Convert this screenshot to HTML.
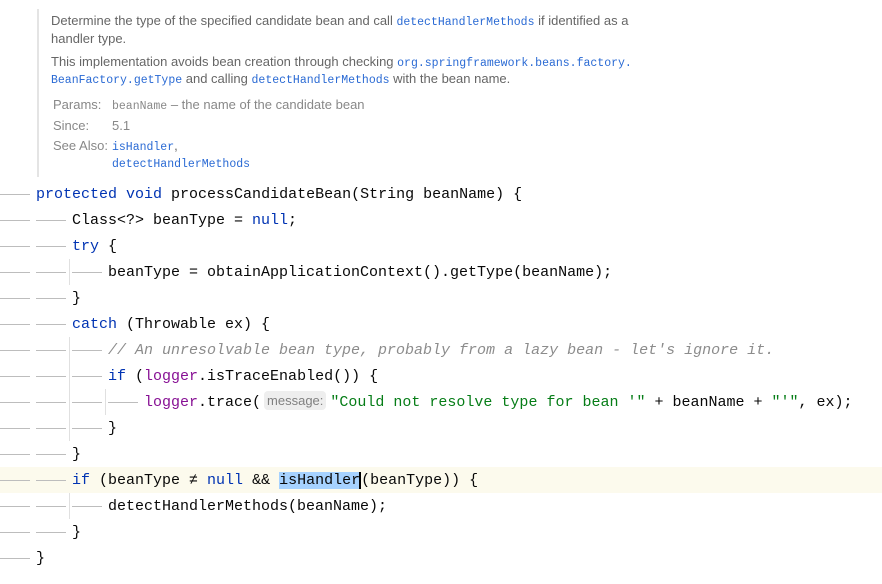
<!DOCTYPE html>
<html><head><meta charset="utf-8"><style>
body{margin:0;width:882px;height:584px;background:#fff;overflow:hidden;position:relative;font-family:"Liberation Sans",sans-serif}
.doc{position:absolute;left:37px;top:9px;width:840px;height:168px;border-left:2px solid #e4e4e4;color:#666;font-size:13px}
.doc div{position:absolute;left:12px;white-space:nowrap}
.m{font-family:"Liberation Mono",monospace;font-size:11.5px;color:#2a6ad4}
.g{color:#888}
.ln{position:absolute;left:0;height:26px;width:882px;font-family:"Liberation Mono",monospace;font-size:15px;line-height:28px;color:#080808;white-space:pre}
.seg{position:absolute;top:13px;height:1px;width:30px;background:#bdbdbd}
.k{color:#0033b3}.c{color:#8c8c8c;font-style:italic}.s{color:#067d17}.p{color:#871094}
.hint{display:inline-block;background:#eeeeee;color:#808080;font-family:"Liberation Sans",sans-serif;font-size:13px;line-height:19px;padding:0 3px;border-radius:4px;margin:0 4px 0 3px;vertical-align:1px}
.sel{background:#a6d2ff}
.v{position:absolute;width:1px;background:#e0e0e0}
</style></head><body>
<div class="doc">
<div style="top:4px">Determine the type of the specified candidate bean and call <span class="m">detectHandlerMethods</span> if identified as a</div>
<div style="top:22px">handler type.</div>
<div style="top:45px">This implementation avoids bean creation through checking <span class="m">org.springframework.beans.factory.</span></div>
<div style="top:62px"><span class="m">BeanFactory.getType</span> and calling <span class="m">detectHandlerMethods</span> with the bean name.</div>
<div style="top:88px;left:14px" class="g">Params:</div><div style="top:88px;left:73px" class="g"><span class="m" style="color:#888">beanName</span> – the name of the candidate bean</div>
<div style="top:109px;left:14px" class="g">Since:</div><div style="top:109px;left:73px" class="g">5.1</div>
<div style="top:129px;left:14px" class="g">See Also:</div><div style="top:129px;left:73px"><span class="m">isHandler</span>,</div>
<div style="top:146px;left:73px"><span class="m">detectHandlerMethods</span></div>
</div>
<div style="position:absolute;left:0;top:467px;width:882px;height:26px;background:#fcfaed"></div>
<div class="v" style="left:69px;top:259px;height:26px"></div>
<div class="v" style="left:69px;top:337px;height:104px"></div>
<div class="v" style="left:105px;top:389px;height:26px"></div>
<div class="v" style="left:69px;top:493px;height:26px"></div>

<div class="ln" style="top:181px"><i class="seg" style="left:0"></i><span style="position:absolute;left:36px"><span class="k">protected</span> <span class="k">void</span> processCandidateBean(String beanName) {</span></div>
<div class="ln" style="top:207px"><i class="seg" style="left:0"></i><i class="seg" style="left:36px"></i><span style="position:absolute;left:72px">Class&lt;?&gt; beanType = <span class="k">null</span>;</span></div>
<div class="ln" style="top:233px"><i class="seg" style="left:0"></i><i class="seg" style="left:36px"></i><span style="position:absolute;left:72px"><span class="k">try</span> {</span></div>
<div class="ln" style="top:259px"><i class="seg" style="left:0"></i><i class="seg" style="left:36px"></i><i class="seg" style="left:72px"></i><span style="position:absolute;left:108px">beanType = obtainApplicationContext().getType(beanName);</span></div>
<div class="ln" style="top:285px"><i class="seg" style="left:0"></i><i class="seg" style="left:36px"></i><span style="position:absolute;left:72px">}</span></div>
<div class="ln" style="top:311px"><i class="seg" style="left:0"></i><i class="seg" style="left:36px"></i><span style="position:absolute;left:72px"><span class="k">catch</span> (Throwable ex) {</span></div>
<div class="ln" style="top:337px"><i class="seg" style="left:0"></i><i class="seg" style="left:36px"></i><i class="seg" style="left:72px"></i><span style="position:absolute;left:108px" class="c">// An unresolvable bean type, probably from a lazy bean - let's ignore it.</span></div>
<div class="ln" style="top:363px"><i class="seg" style="left:0"></i><i class="seg" style="left:36px"></i><i class="seg" style="left:72px"></i><span style="position:absolute;left:108px"><span class="k">if</span> (<span class="p">logger</span>.isTraceEnabled()) {</span></div>
<div class="ln" style="top:389px"><i class="seg" style="left:0"></i><i class="seg" style="left:36px"></i><i class="seg" style="left:72px"></i><i class="seg" style="left:108px"></i><span style="position:absolute;left:144px"><span class="p">logger</span>.trace(<span class="hint">message:</span><span class="s">"Could not resolve type for bean '"</span> + beanName + <span class="s">"'"</span>, ex);</span></div>
<div class="ln" style="top:415px"><i class="seg" style="left:0"></i><i class="seg" style="left:36px"></i><i class="seg" style="left:72px"></i><span style="position:absolute;left:108px">}</span></div>
<div class="ln" style="top:441px"><i class="seg" style="left:0"></i><i class="seg" style="left:36px"></i><span style="position:absolute;left:72px">}</span></div>
<div class="ln" style="top:467px"><i class="seg" style="left:0"></i><i class="seg" style="left:36px"></i><span style="position:absolute;left:72px"><span class="k">if</span> (beanType ≠ <span class="k">null</span> &amp;&amp; <span class="sel">isHandler</span><span style="border-left:2px solid #000;margin-left:-1px"></span>(beanType)) {</span></div>
<div class="ln" style="top:493px"><i class="seg" style="left:0"></i><i class="seg" style="left:36px"></i><i class="seg" style="left:72px"></i><span style="position:absolute;left:108px">detectHandlerMethods(beanName);</span></div>
<div class="ln" style="top:519px"><i class="seg" style="left:0"></i><i class="seg" style="left:36px"></i><span style="position:absolute;left:72px">}</span></div>
<div class="ln" style="top:545px"><i class="seg" style="left:0"></i><span style="position:absolute;left:36px">}</span></div>
</body></html>
